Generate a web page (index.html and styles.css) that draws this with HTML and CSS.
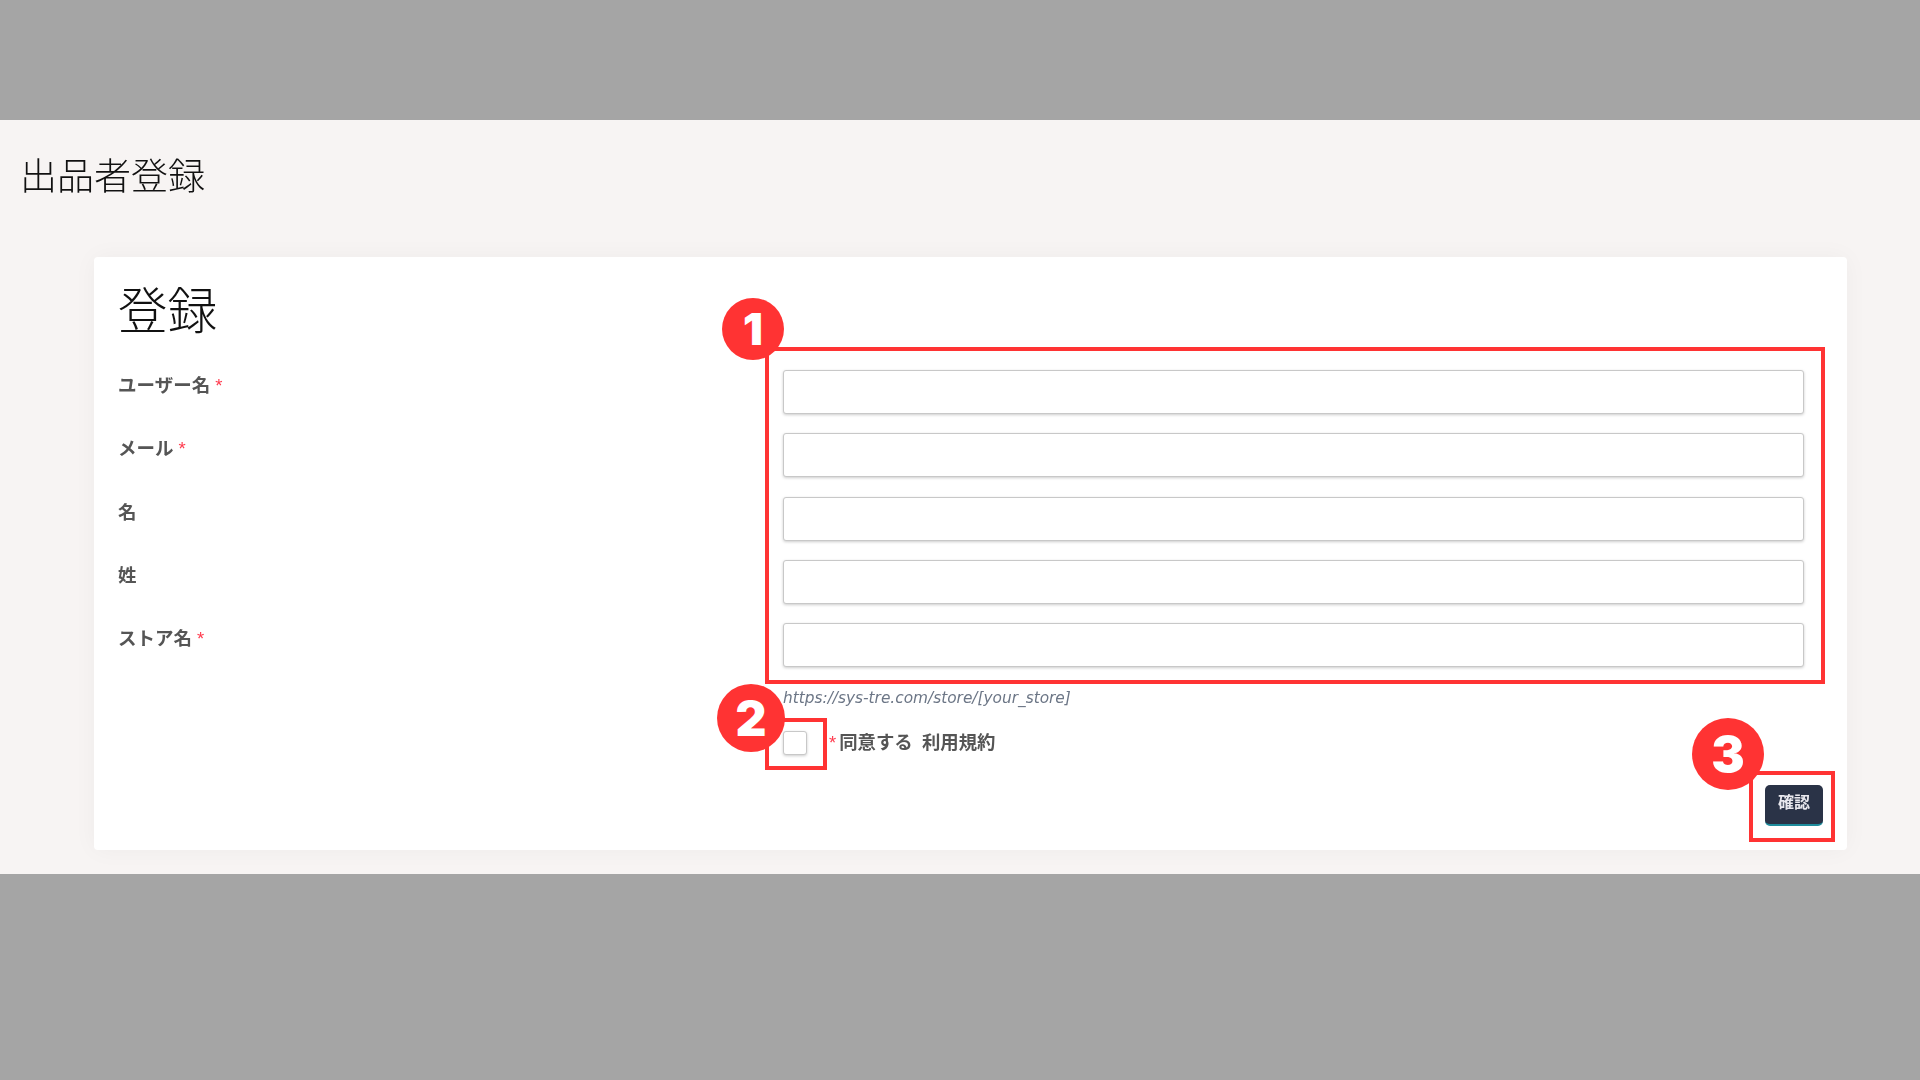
FILE: index.html
```html
<!DOCTYPE html>
<html lang="ja">
<head>
    <meta charset="UTF-8">
    <meta name="viewport" content="width=device-width, initial-scale=1.0">
    <title>出品者登録</title>
    <link rel="stylesheet" href="styles.css">
</head>
<body>
    <div class="band-top"></div>

    <div class="page">
        <h1 class="page-title">出品者登録</h1>

        <div class="card">
            <h2 class="card-title">登録</h2>

            <form class="form">
                <div class="form-row">
                    <label class="field-label">ユーザー名<span class="required">*</span></label>
                    <input class="text-input" type="text">
                </div>
                <div class="form-row">
                    <label class="field-label">メール<span class="required">*</span></label>
                    <input class="text-input" type="text">
                </div>
                <div class="form-row">
                    <label class="field-label">名</label>
                    <input class="text-input" type="text">
                </div>
                <div class="form-row">
                    <label class="field-label">姓</label>
                    <input class="text-input" type="text">
                </div>
                <div class="form-row">
                    <label class="field-label">ストア名<span class="required">*</span></label>
                    <input class="text-input" type="text">
                </div>
                <div class="form-row hint-row">
                    <span></span>
                    <p class="hint">https://sys-tre.com/store/[your_store]</p>
                </div>
                <div class="form-row terms-row">
                    <span></span>
                    <div class="terms">
                        <span class="checkbox"></span>
                        <span class="terms-text"><span class="required">*</span>同意する 利用規約</span>
                    </div>
                </div>
                <div class="submit-row">
                    <button class="submit-btn" type="button">確認</button>
                </div>
            </form>
        </div>
    </div>

    <div class="band-bottom"></div>

    <!-- Annotations over the screenshot -->
    <div class="mark mark-fields"></div>
    <div class="mark mark-check"></div>
    <div class="mark mark-submit"></div>
    <div class="badge badge-1">1</div>
    <div class="badge badge-2">2</div>
    <div class="badge badge-3">3</div>
</body>
</html>
```

FILE: styles.css
```css
:root {
    --red: #ff3333;
    --jp-font: "Noto Sans CJK JP", "Liberation Sans", sans-serif;
}

html, body {
    height: 100%;
}

body {
    margin: 0;
    position: relative;
    display: flex;
    flex-direction: column;
    height: 1080px;
    overflow: hidden;
    font-family: var(--jp-font);
    background-color: #a5a5a5;
}

.band-top {
    height: 120px;
    background-color: #a5a5a5;
}

.band-bottom {
    height: 206px;
    background-color: #a5a5a5;
}

.page {
    flex: 1;
    background-color: #f7f4f3;
    padding: 34px 73px 0 94px;
    box-sizing: border-box;
}

.page-title {
    margin: 0 0 63px -74px;
    font-size: 37px;
    line-height: 40px;
    font-weight: 300;
    color: #111111;
    filter: blur(0.5px);
}

.card {
    background-color: #ffffff;
    border-radius: 4px;
    box-shadow: 0 0 24px rgba(0, 0, 0, 0.04);
    padding: 21px 24px 24px 24px;
}

.card-title {
    margin: 0 0 32px;
    font-size: 49.5px;
    line-height: 60px;
    font-weight: 300;
    color: #111111;
    filter: blur(0.5px);
}

.form {
    display: flex;
    flex-direction: column;
    gap: 19.3px;
}

.form-row {
    display: grid;
    grid-template-columns: 665px 1fr;
    padding-right: 19px;
}

.field-label {
    font-size: 18.5px;
    line-height: 28px;
    font-weight: 700;
    color: #555555;
    filter: blur(0.5px);
}

.required {
    margin-left: 5px;
    color: #ff3b4e;
    font-family: "Liberation Sans", sans-serif;
    font-weight: 400;
}

.text-input {
    height: 44px;
    box-sizing: border-box;
    width: 100%;
    padding: 0 12px;
    background-color: #ffffff;
    border: 1.5px solid #c8c8c8;
    border-radius: 3px;
    box-shadow: 0 1px 3px rgba(0, 0, 0, 0.2);
}

.hint-row {
    margin-top: 1.5px;
}

.hint {
    margin: 0;
    font-family: "DejaVu Sans", sans-serif;
    font-style: italic;
    font-size: 15.35px;
    line-height: 20px;
    color: #6c7686;
    filter: blur(0.5px);
}

.terms-row {
    margin-top: 4px;
}

.terms {
    display: flex;
    align-items: center;
    height: 24px;
}

.checkbox {
    width: 24px;
    height: 24px;
    box-sizing: border-box;
    background-color: #ffffff;
    border: 1.5px solid #c8c8c8;
    border-radius: 3px;
    box-shadow: 0 1px 3px rgba(0, 0, 0, 0.2);
}

.terms-text {
    margin: -2px 0 0 23px;
    font-size: 18.4px;
    line-height: 24px;
    font-weight: 700;
    color: #555555;
    word-spacing: 5px;
    filter: blur(0.5px);
}

.terms-text .required {
    margin: 0 3px 0 -1px;
}

.submit-row {
    display: flex;
    justify-content: flex-end;
    margin-top: 10.7px;
}

.submit-btn {
    width: 58px;
    height: 41px;
    padding: 0 0 7px;
    background-color: #2a3347;
    border: none;
    border-bottom: 2px solid #1e8c9c;
    border-radius: 5px;
    color: #e8e8ee;
    font-family: var(--jp-font);
    font-size: 16px;
    font-weight: 700;
    filter: blur(0.7px);
}

/* Annotations */
.mark {
    position: absolute;
    box-sizing: border-box;
    border: 4px solid var(--red);
}

.mark-fields {
    left: 765px;
    top: 347px;
    width: 1060px;
    height: 337px;
}

.mark-check {
    left: 765px;
    top: 718px;
    width: 62px;
    height: 52px;
}

.mark-submit {
    left: 1749px;
    top: 771px;
    width: 86px;
    height: 71px;
}

.badge {
    position: absolute;
    display: flex;
    align-items: center;
    justify-content: center;
    border-radius: 50%;
    background-color: var(--red);
    color: #ffffff;
    font-family: Inter, sans-serif;
    font-weight: 900;
}

.badge-1 {
    left: 722px;
    top: 298px;
    width: 62px;
    height: 62px;
    font-size: 44px;
}

.badge-2 {
    left: 717px;
    top: 684px;
    width: 68px;
    height: 68px;
    font-size: 48px;
}

.badge-3 {
    left: 1692px;
    top: 718px;
    width: 72px;
    height: 72px;
    font-size: 50px;
}
```
